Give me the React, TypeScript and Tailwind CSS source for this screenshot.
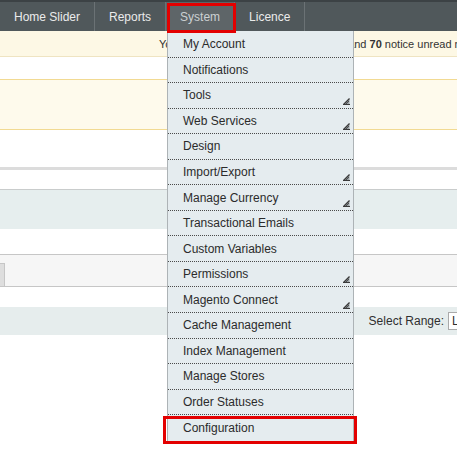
import React from 'react';

const NAV_ITEMS = ['Home Slider', 'Reports', 'System', 'Licence'];

const MENU_ITEMS: { label: string; sub?: boolean }[] = [
  { label: 'My Account' },
  { label: 'Notifications' },
  { label: 'Tools', sub: true },
  { label: 'Web Services', sub: true },
  { label: 'Design' },
  { label: 'Import/Export', sub: true },
  { label: 'Manage Currency', sub: true },
  { label: 'Transactional Emails' },
  { label: 'Custom Variables' },
  { label: 'Permissions', sub: true },
  { label: 'Magento Connect', sub: true },
  { label: 'Cache Management' },
  { label: 'Index Management' },
  { label: 'Manage Stores' },
  { label: 'Order Statuses' },
  { label: 'Configuration' },
];

function SubArrow() {
  return (
    <svg
      width="7"
      height="7"
      viewBox="0 0 7 7"
      className="absolute right-[3px] bottom-[3px]"
    >
      <path d="M0.5 6.5 L6.5 0.5 L6.5 6.5 Z" fill="#9ba2a5" />
      <path d="M0.5 6.5 L6.5 0.5" stroke="#3a3a3a" strokeWidth="1.2" />
      <path d="M0 6.5 H7" stroke="#3a3a3a" strokeWidth="1" />
      <path d="M3 6 L6 3" stroke="#3a3a3a" strokeWidth="0.8" />
    </svg>
  );
}

export default function App() {
  return (
    <div className="relative w-[457px] h-[455px] overflow-hidden bg-white font-['Liberation_Sans',Arial,sans-serif] text-[#2f2f2f]">
      {/* top nav */}
      <nav className="flex h-[31px] bg-[#50585b] border-t-2 border-[#3c4245]">
        {NAV_ITEMS.map((item) => (
          <div
            key={item}
            className={
              item === 'System'
                ? 'flex items-center px-[14px] text-[12px] text-[#ccd0d2] bg-[#5e6568] border-r border-[#6b7275]'
                : 'flex items-center px-[14px] text-[12px] text-[#ebebeb] border-r border-[#6b7275]'
            }
          >
            {item}
          </div>
        ))}
      </nav>

      {/* notice bar */}
      <div className="h-[26px] bg-[#fdf8e5] border-b border-[#efe4c2] flex items-center pt-[2px] pl-[159px] text-[11px] text-[#333] whitespace-nowrap overflow-hidden">
        You have 1 critical, 16 major, 21 minor and&nbsp;<b>70</b>&nbsp;notice unread message(s). Go to messages inbox.
      </div>

      <div className="h-[22px]" />
      <div className="h-[51px] bg-[#fefaec] border-y border-[#f2da92]" />
      <div className="h-[37px]" />
      <div className="h-[3px] bg-[#dcdcdc]" />
      <div className="h-[19px]" />
      <div className="h-[40px] bg-[#e6eeee] border-t border-[#c9cccc]" />
      <div className="h-[25px]" />
      <div className="h-[33px] bg-[#f6f6f6] border-y border-[#c6c6c6] flex items-end">
        <div className="w-[5px] h-[23px] bg-[#dedede] border-r border-t border-[#c6c6c6]" />
      </div>
      <div className="h-[20px]" />
      <div className="h-[28px] bg-[#e6eded] flex items-center justify-end gap-[4px] text-[12px]">
        <span>Select Range:</span>
        <div className="w-[9px] h-[18px] bg-white border border-[#aaa] border-r-0 pl-[3px] leading-[16px] overflow-hidden">
          L
        </div>
      </div>

      {/* System dropdown */}
      <ul className="absolute left-[167px] top-[31px] w-[187px] pt-[1px] bg-[#e5ecef] border-x border-[#adb3b6]">
        {MENU_ITEMS.map((m, i) => (
          <li
            key={m.label}
            className={
              i === MENU_ITEMS.length - 1
                ? 'relative h-[25.55px] flex items-center pl-[15px] text-[12px] text-[#2b2b2b]'
                : 'relative h-[25.55px] flex items-center pl-[15px] text-[12px] text-[#2b2b2b] border-b border-dotted border-[#4a4a4a]'
            }
          >
            {m.label}
            {m.sub && <SubArrow />}
          </li>
        ))}
      </ul>

      {/* highlight boxes */}
      <div className="absolute left-[167px] top-[3px] w-[69px] h-[30px] border-[3px] border-[#e30000]" />
      <div className="absolute left-[163px] top-[416px] w-[194px] h-[28px] border-[3px] border-[#e30000]" />
    </div>
  );
}
